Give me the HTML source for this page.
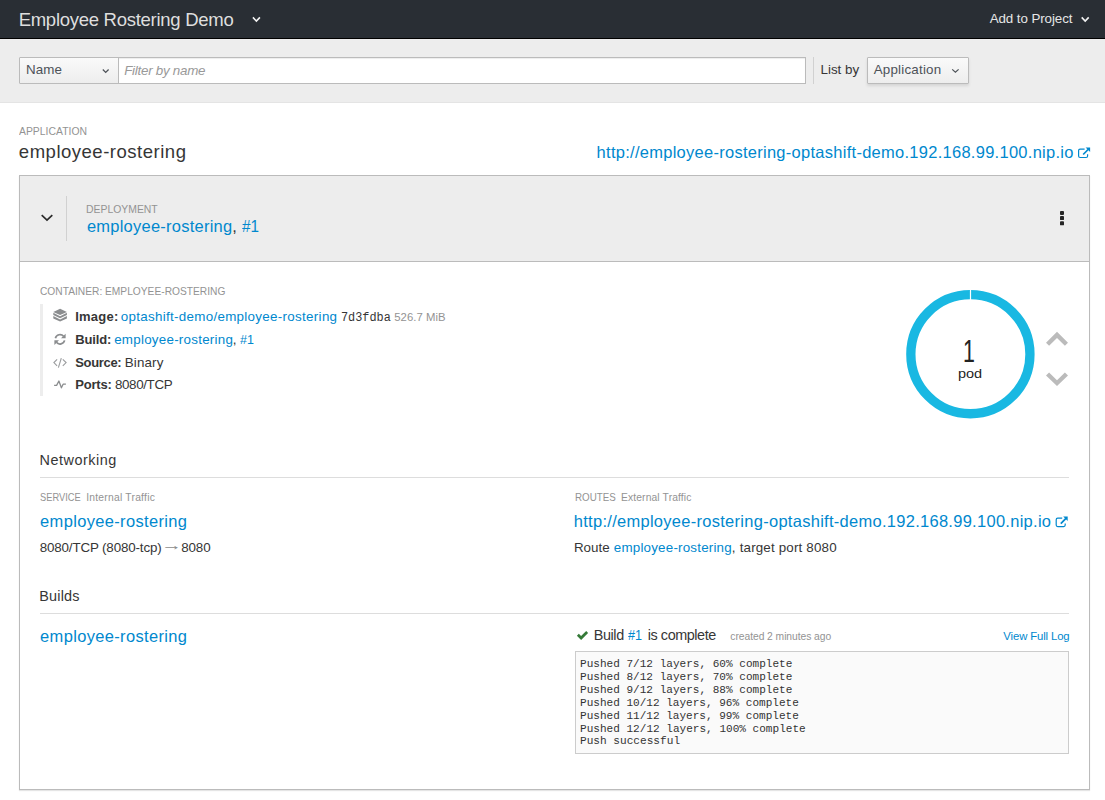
<!DOCTYPE html>
<html lang="en">
<head>
<meta charset="utf-8">
<title>Employee Rostering Demo - Overview</title>
<style>

html,body{margin:0;padding:0;}
body{width:1105px;height:800px;position:relative;overflow:hidden;background:#fff;font-family:"Liberation Sans", sans-serif;}
.t{position:absolute;white-space:pre;line-height:1;font-family:"Liberation Sans", sans-serif;transform-origin:0 0;}

.abs{position:absolute;}
#nav{left:0;top:0;width:1105px;height:38px;background:#292e34;border-bottom:1px solid #000;}
#filterbar{left:0;top:39px;width:1105px;height:63px;background:#ededed;border-bottom:1px solid #e4e4e4;}
.btn{background:linear-gradient(#fafafa,#ededed);border:1px solid #bbb;box-sizing:border-box;border-radius:1px;box-shadow:0 2px 3px rgba(3,3,3,.1);}
#sel{left:19px;top:57px;width:100px;height:27px;box-shadow:none;}
#inp{left:118px;top:57px;width:688px;height:27px;background:#fff;border:1px solid #bbb;box-sizing:border-box;box-shadow:inset 0 1px 1px rgba(3,3,3,.075);}
#vdiv{left:813px;top:57px;width:1px;height:27px;background:#d1d1d1;}
#listby{left:867px;top:57px;width:102px;height:27px;}
#panel{left:19px;top:175px;width:1071px;height:615px;border:1px solid #bbb;box-sizing:border-box;background:#fff;box-shadow:0 1px 1px rgba(3,3,3,.1);}
#phead{left:20px;top:176px;width:1069px;height:85px;background:#ededed;border-bottom:1px solid #bbb;}
#hdiv{left:66px;top:196px;width:1px;height:45px;background:#d1d1d1;}
#cbar{left:40px;top:304px;width:3px;height:92px;background:#ededed;}
.rule{height:1px;background:#ddd;left:40px;width:1029px;}
#log{left:575px;top:651px;width:494px;height:103px;background:#fafafa;border:1px solid #ccc;box-sizing:border-box;}
svg{position:absolute;overflow:visible;}
</style>
</head>
<body>
<div class="abs" id="nav"></div>
<div class="abs" id="filterbar"></div>
<div class="abs btn" id="sel"></div>
<div class="abs" id="inp"></div>
<div class="abs" id="vdiv"></div>
<div class="abs btn" id="listby"></div>
<div class="abs" id="panel"></div>
<div class="abs" id="phead"></div>
<div class="abs" id="hdiv"></div>
<div class="abs" id="cbar"></div>
<div class="abs rule" style="top:477px"></div>
<div class="abs rule" style="top:613px"></div>
<div class="abs" id="log"></div>
<svg width="1105" height="800" viewBox="0 0 1105 800" style="left:0;top:0">

<!-- nav chevrons -->
<path d="M252.9 17.4L256.4 21.1L259.9 17.4" fill="none" stroke="#f2f2f2" stroke-width="1.6"/>
<path d="M1081.7 17.4L1085.2 21.1L1088.7 17.4" fill="none" stroke="#f2f2f2" stroke-width="1.6"/>
<!-- select chevrons -->
<path d="M102.8 69.5L105.7 72.4L108.6 69.5" fill="none" stroke="#4d5258" stroke-width="1.25"/>
<path d="M952.2 69.4L955.4 72.2L958.6 69.4" fill="none" stroke="#4d5258" stroke-width="1.25"/>
<!-- panel chevron -->
<path d="M41.7 215.1L47 220.1L52.3 215.1" fill="none" stroke="#2b2b2b" stroke-width="1.7"/>
<!-- kebab -->
<g fill="#252525"><rect x="1060" y="211" width="4" height="4" rx="0.9"/><rect x="1060" y="216.1" width="4" height="4" rx="0.9"/><rect x="1060" y="221.3" width="4" height="4" rx="0.9"/></g>
<!-- ext link icons -->
<g fill="none" stroke="#0088ce">
<path d="M1084.6 149.1H1080.1a1.5 1.5 0 0 0-1.5 1.5V156a1.5 1.5 0 0 0 1.5 1.5H1086.1a1.5 1.5 0 0 0 1.5-1.5V154.3" stroke-width="1.2"/>
<path d="M1083.2 154.5L1088.6 149" stroke-width="1.7"/>
<path d="M1085.6 147.4H1090.1V151.9Z" fill="#0088ce" stroke="none"/>
</g>
<g fill="none" stroke="#0088ce" transform="translate(-22.4 369.1)">
<path d="M1084.6 149.1H1080.1a1.5 1.5 0 0 0-1.5 1.5V156a1.5 1.5 0 0 0 1.5 1.5H1086.1a1.5 1.5 0 0 0 1.5-1.5V154.3" stroke-width="1.2"/>
<path d="M1083.2 154.5L1088.6 149" stroke-width="1.7"/>
<path d="M1085.6 147.4H1090.1V151.9Z" fill="#0088ce" stroke="none"/>
</g>
<!-- image (layers) icon -->
<g fill="#8b8d8f">
<path d="M60.1 308.8L66.9 311.9L60.1 315L53.3 311.9Z"/>
<path d="M53.3 312.7L60.1 316.2L66.9 312.7V315.1L60.1 318.3L53.3 315.1Z"/>
<path d="M53.3 315.9L60.1 319.5L66.9 315.9V318.4L60.1 321.6L53.3 318.4Z"/>
</g>
<!-- refresh icon -->
<g fill="none" stroke="#8b8d8f" stroke-width="1.7">
<path d="M55.4 338.2A4.7 4.7 0 0 1 63.6 336.3"/>
<path d="M64.6 340.4A4.7 4.7 0 0 1 56.4 342.3"/>
</g>
<path d="M65.6 333.7V338.3H61Z" fill="#8b8d8f"/>
<path d="M54.4 344.9V340.3H59Z" fill="#8b8d8f"/>
<!-- code icon -->
<g fill="none" stroke="#9a9c9e" stroke-width="1.1">
<path d="M57.1 359.4L53.9 362.6L57.1 365.8"/>
<path d="M61.3 358.2L58.4 367.6"/>
<path d="M62.8 359.4L66.1 362.6L62.8 365.8"/>
</g>
<!-- pulse icon -->
<path d="M54.1 385.4H56.6L58.9 381L61.4 387.8L63.1 384.2H65.9" fill="none" stroke="#8b8d8f" stroke-width="1.3" stroke-linejoin="round"/>
<!-- donut -->
<circle cx="970.4" cy="354.2" r="59.55" fill="none" stroke="#19b8e2" stroke-width="9.3"/>
<rect x="969.9" y="289" width="1.2" height="11" fill="#fff"/>
<!-- scale chevrons -->
<g fill="#bbb">
<path d="M1057 331.8L1068 342.7L1064.9 345.8L1057 338L1049.1 345.8L1046 342.7Z"/>
<path d="M1046 375.6L1049.1 372.5L1057 380.3L1064.9 372.5L1068 375.6L1057 386.1Z"/>
</g>
<!-- check -->
<path d="M576.9 635.7L578.8 633.8L581.1 636.1L586.2 631L588.1 632.9L581.1 639.9Z" fill="#357a38"/>
</svg>

<span class="t" style="left:18.67px;top:10.80px;font-size:18.54px;color:#dedede;letter-spacing:-0.290px;">Employee Rostering Demo</span>
<span class="t" style="left:989.65px;top:12.01px;font-size:13.39px;color:#e6e6e6;letter-spacing:-0.092px;">Add to Project</span>
<span class="t" style="left:25.90px;top:63.41px;font-size:13.39px;color:#4d5258;letter-spacing:0.154px;">Name</span>
<span class="t" style="left:124.17px;top:64.31px;font-size:13.39px;color:#999;letter-spacing:-0.259px;font-style:italic;">Filter by name</span>
<span class="t" style="left:820.48px;top:62.81px;font-size:13.39px;color:#363636;letter-spacing:0.010px;">List by</span>
<span class="t" style="left:873.65px;top:62.81px;font-size:13.39px;color:#4d5258;letter-spacing:0.213px;">Application</span>
<span class="t" style="left:19.31px;top:125.70px;font-size:11.0px;color:#939393;transform:scaleX(0.9453);">APPLICATION</span>
<span class="t" style="left:18.83px;top:142.80px;font-size:18.54px;color:#363636;letter-spacing:0.500px;">employee-rostering</span>
<span class="t" style="left:596.58px;top:144.01px;font-size:16.48px;color:#0088ce;letter-spacing:0.283px;">http://employee-rostering-optashift-demo.192.168.99.100.nip.io</span>
<span class="t" style="left:86.14px;top:203.81px;font-size:11.0px;color:#939393;transform:scaleX(0.9462);">DEPLOYMENT</span>
<span class="t" style="left:86.88px;top:217.91px;font-size:16.48px;color:#0088ce;letter-spacing:0.251px;">employee-rostering</span>
<span class="t" style="left:232.36px;top:217.91px;font-size:16.48px;color:#363636;">,</span>
<span class="t" style="left:241.84px;top:217.91px;font-size:16.48px;color:#0088ce;transform:scaleX(0.9271);">#1</span>
<span class="t" style="left:40.16px;top:285.81px;font-size:11.0px;color:#939393;transform:scaleX(0.9283);">CONTAINER: EMPLOYEE-ROSTERING</span>
<span class="t" style="left:75.20px;top:310.01px;font-size:13.0px;color:#363636;letter-spacing:0.240px;font-weight:700;">Image:</span>
<span class="t" style="left:120.67px;top:310.01px;font-size:13.39px;color:#0088ce;letter-spacing:0.304px;">optashift-demo/employee-rostering</span>
<span class="t" style="left:340.85px;top:312.00px;font-size:12.3px;color:#363636;font-family:'Liberation Mono',monospace;transform:scaleX(0.9649);">7d3fdba</span>
<span class="t" style="left:394.16px;top:312.01px;font-size:11.33px;color:#939393;letter-spacing:0.063px;">526.7 MiB</span>
<span class="t" style="left:75.20px;top:332.71px;font-size:13.0px;color:#363636;letter-spacing:-0.144px;font-weight:700;">Build:</span>
<span class="t" style="left:114.20px;top:332.71px;font-size:13.39px;color:#0088ce;letter-spacing:0.246px;">employee-rostering</span>
<span class="t" style="left:232.85px;top:332.71px;font-size:13.39px;color:#363636;">,</span>
<span class="t" style="left:240.07px;top:332.71px;font-size:13.39px;color:#0088ce;transform:scaleX(0.9343);">#1</span>
<span class="t" style="left:75.20px;top:355.60px;font-size:13.0px;color:#363636;letter-spacing:-0.320px;font-weight:700;">Source:</span>
<span class="t" style="left:124.69px;top:355.60px;font-size:13.39px;color:#363636;letter-spacing:0.154px;">Binary</span>
<span class="t" style="left:75.20px;top:378.31px;font-size:13.0px;color:#363636;letter-spacing:-0.192px;font-weight:700;">Ports:</span>
<span class="t" style="left:114.92px;top:378.31px;font-size:13.39px;color:#363636;letter-spacing:-0.355px;">8080/TCP</span>
<span class="t" style="left:962.67px;top:336.41px;font-size:61.0px;color:#222;transform:scale(0.3510,0.5);">1</span>
<span class="t" style="left:957.82px;top:367.60px;font-size:12.5px;color:#222;transform:scaleX(1.1595);">pod</span>
<span class="t" style="left:39.62px;top:452.81px;font-size:14.42px;color:#363636;letter-spacing:0.500px;">Networking</span>
<span class="t" style="left:40.44px;top:492.30px;font-size:11.0px;color:#939393;transform:scaleX(0.8460);">SERVICE</span>
<span class="t" style="left:86.13px;top:493.31px;font-size:10.3px;color:#939393;letter-spacing:0.243px;">Internal Traffic</span>
<span class="t" style="left:40.12px;top:513.01px;font-size:16.48px;color:#0088ce;letter-spacing:0.343px;">employee-rostering</span>
<span class="t" style="left:39.73px;top:540.51px;font-size:13.39px;color:#363636;letter-spacing:-0.151px;">8080/TCP (8080-tcp)</span>
<span class="t" style="left:160.60px;top:537.60px;font-size:14.42px;color:#8b8b8b;transform:scaleX(1.4520);">→</span>
<span class="t" style="left:181.18px;top:540.51px;font-size:13.39px;color:#363636;letter-spacing:-0.092px;">8080</span>
<span class="t" style="left:574.79px;top:492.31px;font-size:11.0px;color:#939393;transform:scaleX(0.8905);">ROUTES</span>
<span class="t" style="left:620.99px;top:493.31px;font-size:10.3px;color:#939393;letter-spacing:0.129px;">External Traffic</span>
<span class="t" style="left:573.80px;top:513.01px;font-size:16.48px;color:#0088ce;letter-spacing:0.289px;">http://employee-rostering-optashift-demo.192.168.99.100.nip.io</span>
<span class="t" style="left:573.88px;top:540.51px;font-size:13.39px;color:#363636;letter-spacing:0.022px;">Route</span>
<span class="t" style="left:613.82px;top:540.51px;font-size:13.39px;color:#0088ce;letter-spacing:0.198px;">employee-rostering</span>
<span class="t" style="left:731.87px;top:540.51px;font-size:13.39px;color:#363636;letter-spacing:0.171px;">, target port 8080</span>
<span class="t" style="left:39.31px;top:588.91px;font-size:14.42px;color:#363636;letter-spacing:0.194px;">Builds</span>
<span class="t" style="left:40.12px;top:628.21px;font-size:16.48px;color:#0088ce;letter-spacing:0.343px;">employee-rostering</span>
<span class="t" style="left:593.76px;top:628.01px;font-size:14.42px;color:#363636;letter-spacing:-0.405px;">Build</span>
<span class="t" style="left:628.38px;top:628.01px;font-size:14.42px;color:#0088ce;transform:scaleX(0.8754);">#1</span>
<span class="t" style="left:647.79px;top:628.01px;font-size:14.42px;color:#363636;letter-spacing:-0.439px;">is complete</span>
<span class="t" style="left:730.32px;top:632.41px;font-size:10.3px;color:#939393;letter-spacing:-0.050px;">created 2 minutes ago</span>
<span class="t" style="left:1003.36px;top:631.41px;font-size:11.33px;color:#0088ce;letter-spacing:-0.124px;">View Full Log</span>
<span class="t" style="left:579.56px;top:658.01px;font-size:11.5px;color:#333;font-family:'Liberation Mono',monospace;transform:scaleX(0.9617);">Pushed 7/12 layers, 60% complete</span>
<span class="t" style="left:579.53px;top:670.91px;font-size:11.5px;color:#333;font-family:'Liberation Mono',monospace;transform:scaleX(0.9617);">Pushed 8/12 layers, 70% complete</span>
<span class="t" style="left:579.53px;top:683.80px;font-size:11.5px;color:#333;font-family:'Liberation Mono',monospace;transform:scaleX(0.9617);">Pushed 9/12 layers, 88% complete</span>
<span class="t" style="left:579.53px;top:696.71px;font-size:11.5px;color:#333;font-family:'Liberation Mono',monospace;transform:scaleX(0.9607);">Pushed 10/12 layers, 96% complete</span>
<span class="t" style="left:579.53px;top:709.60px;font-size:11.5px;color:#333;font-family:'Liberation Mono',monospace;transform:scaleX(0.9607);">Pushed 11/12 layers, 99% complete</span>
<span class="t" style="left:579.56px;top:722.51px;font-size:11.5px;color:#333;font-family:'Liberation Mono',monospace;transform:scaleX(0.9618);">Pushed 12/12 layers, 100% complete</span>
<span class="t" style="left:579.53px;top:735.41px;font-size:11.5px;color:#333;font-family:'Liberation Mono',monospace;transform:scaleX(0.9665);">Push successful</span>
</body>
</html>
